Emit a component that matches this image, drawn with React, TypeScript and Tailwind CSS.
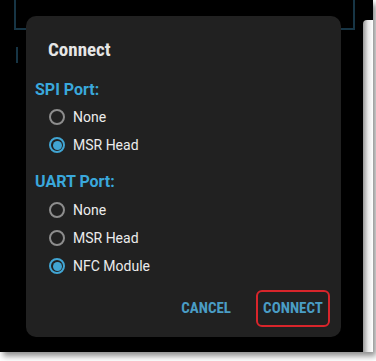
import React from "react";

const condensed = {
  fontFamily: '"Roboto Condensed", Roboto, "Liberation Sans Narrow", sans-serif',
};

function Radio({ label, checked }: { label: string; checked?: boolean }) {
  return (
    <div className="flex h-[28px] items-center pl-[23px]">
      <span
        className={
          "flex h-[16px] w-[16px] items-center justify-center rounded-full border-2 " +
          (checked ? "border-[#41a5d3]" : "border-[#8d8d8d]")
        }
      >
        {checked && <span className="h-[9px] w-[9px] rounded-full bg-[#41a5d3]" />}
      </span>
      <span className="ml-[8px] text-[14px] text-[#ececec]">{label}</span>
    </div>
  );
}

export default function App() {
  return (
    <div
      className="relative h-[361px] w-[376px] overflow-hidden bg-white"
      style={{ fontFamily: 'Roboto, "Noto Sans", sans-serif' }}
    >
      {/* phone screen */}
      <div className="relative h-[352px] w-[373px] bg-black shadow-[3px_4px_6px_rgba(0,0,0,0.45)]">
        {/* content behind the dialog */}
        <div className="ml-[14px] h-[30px] w-[341px] border-x-2 border-b-2 border-[#173545]" />
        <div className="ml-[16px] mt-[17px] h-[16px] w-[2px] bg-[#173545]" />

        {/* right edge strip */}
        <div className="absolute right-0 top-[20px] h-[332px] w-[10px] rounded-tl-[4px] bg-gradient-to-r from-[#9a9a9a] via-[#e6e6e6] to-white" />

        {/* dialog */}
        <div className="absolute left-[26px] top-[16px] h-[321px] w-[315px] rounded-[10px] bg-[#212121] pt-[22px]">
          <div
            className="flex h-[24px] items-center pl-[22px] text-[19px] font-bold text-[#e6e6e6] [font-stretch:condensed]"
            style={condensed}
          >
            Connect
          </div>

          <div className="mb-[3px] mt-[18px] flex h-[20px] items-center pl-[9px] text-[16px] font-bold text-[#3aa8dc]">
            SPI Port:
          </div>
          <Radio label="None" />
          <Radio label="MSR Head" checked />

          <div className="mb-[4px] mt-[13px] flex h-[20px] items-center pl-[9px] text-[16px] font-bold text-[#3aa8dc]">
            UART Port:
          </div>
          <Radio label="None" />
          <Radio label="MSR Head" />
          <Radio label="NFC Module" checked />

          <div
            className="mt-[10px] flex items-center justify-end gap-[17px] pr-[11px] text-[15px] font-bold text-[#4a9dc5] [font-stretch:condensed]"
            style={condensed}
          >
            <button className="h-[37px] px-[8px]">CANCEL</button>
            <button className="flex h-[37px] w-[74px] items-center justify-center rounded-[6px] border-2 border-[#d8252b]">
              CONNECT
            </button>
          </div>
        </div>
      </div>
    </div>
  );
}
